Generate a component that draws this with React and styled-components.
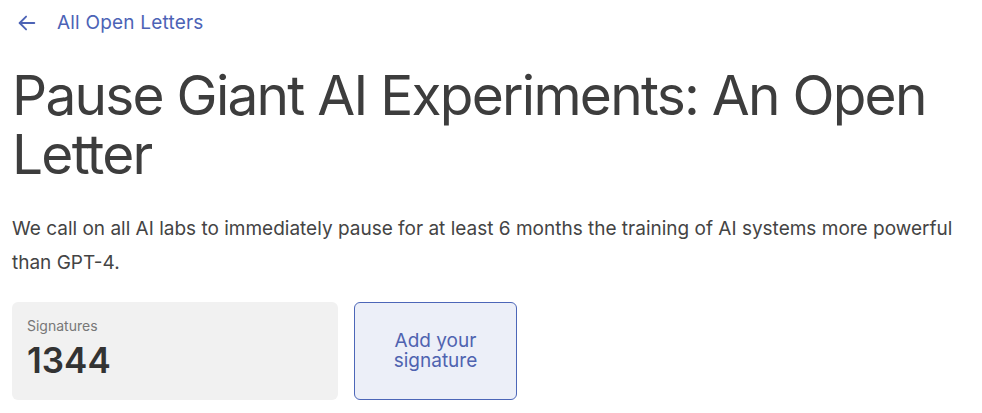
import React from "react";
import styled, { createGlobalStyle } from "styled-components";

const GlobalStyle = createGlobalStyle`
    body {
        margin: 0;
        background: #ffffff;
        font-family: Inter, "Noto Sans", sans-serif;
    }
`

const Page = styled.div`
    padding: 0 12px;
    color: #3d3d3d;
`

const BackLink = styled.a`
    display: flex;
    align-items: center;
    gap: 19px;
    height: 45px;
    padding-left: 4px;
    color: #4c63b6;
    font-size: 19px;
    letter-spacing: 0.2px;
    text-decoration: none;
`

const Title = styled.h1`
    margin: 21px 0 0;
    font-size: 55px;
    font-weight: 400;
    line-height: 59px;
    letter-spacing: -1.75px;
    color: #3d3d3d;
`

const Lead = styled.p`
    margin: 28px 0 0;
    font-size: 19px;
    line-height: 34px;
    color: #444444;
`

const StatsRow = styled.div`
    display: flex;
    gap: 16px;
    margin-top: 22px;
`

const StatBox = styled.div`
    width: 326px;
    height: 98px;
    box-sizing: border-box;
    padding: 15px 15px;
    background: #f1f1f1;
    border-radius: 6px;
`

const StatLabel = styled.div`
    font-size: 14px;
    color: #777777;
    line-height: 18px;
`

const StatValue = styled.div`
    margin-top: 4px;
    font-size: 35px;
    font-weight: 600;
    line-height: 42px;
    color: #333333;
`

const SignButton = styled.button`
    width: 163px;
    height: 98px;
    padding: 0;
    background: #eceff8;
    border: 1px solid #4c66b8;
    border-radius: 6px;
    color: #4f63b0;
    font-family: inherit;
    font-size: 19px;
    line-height: 20px;
    cursor: pointer;
`

const App = () => {
    return (
        <Page>
            <GlobalStyle />
            <BackLink href="#">
                <svg width="22" height="22" viewBox="0 0 24 24" fill="none" stroke="currentColor" strokeWidth="2" strokeLinecap="round" strokeLinejoin="round">
                    <path d="M20 12H4" />
                    <path d="M11 5l-7 7 7 7" />
                </svg>
                All Open Letters
            </BackLink>
            <Title>Pause Giant AI Experiments: An Open Letter</Title>
            <Lead>
                We call on all AI labs to immediately pause for at least 6 months the training of AI systems more powerful than GPT-4.
            </Lead>
            <StatsRow>
                <StatBox>
                    <StatLabel>Signatures</StatLabel>
                    <StatValue>1344</StatValue>
                </StatBox>
                <SignButton>Add your<br />signature</SignButton>
            </StatsRow>
        </Page>
    )
}

export default App;
